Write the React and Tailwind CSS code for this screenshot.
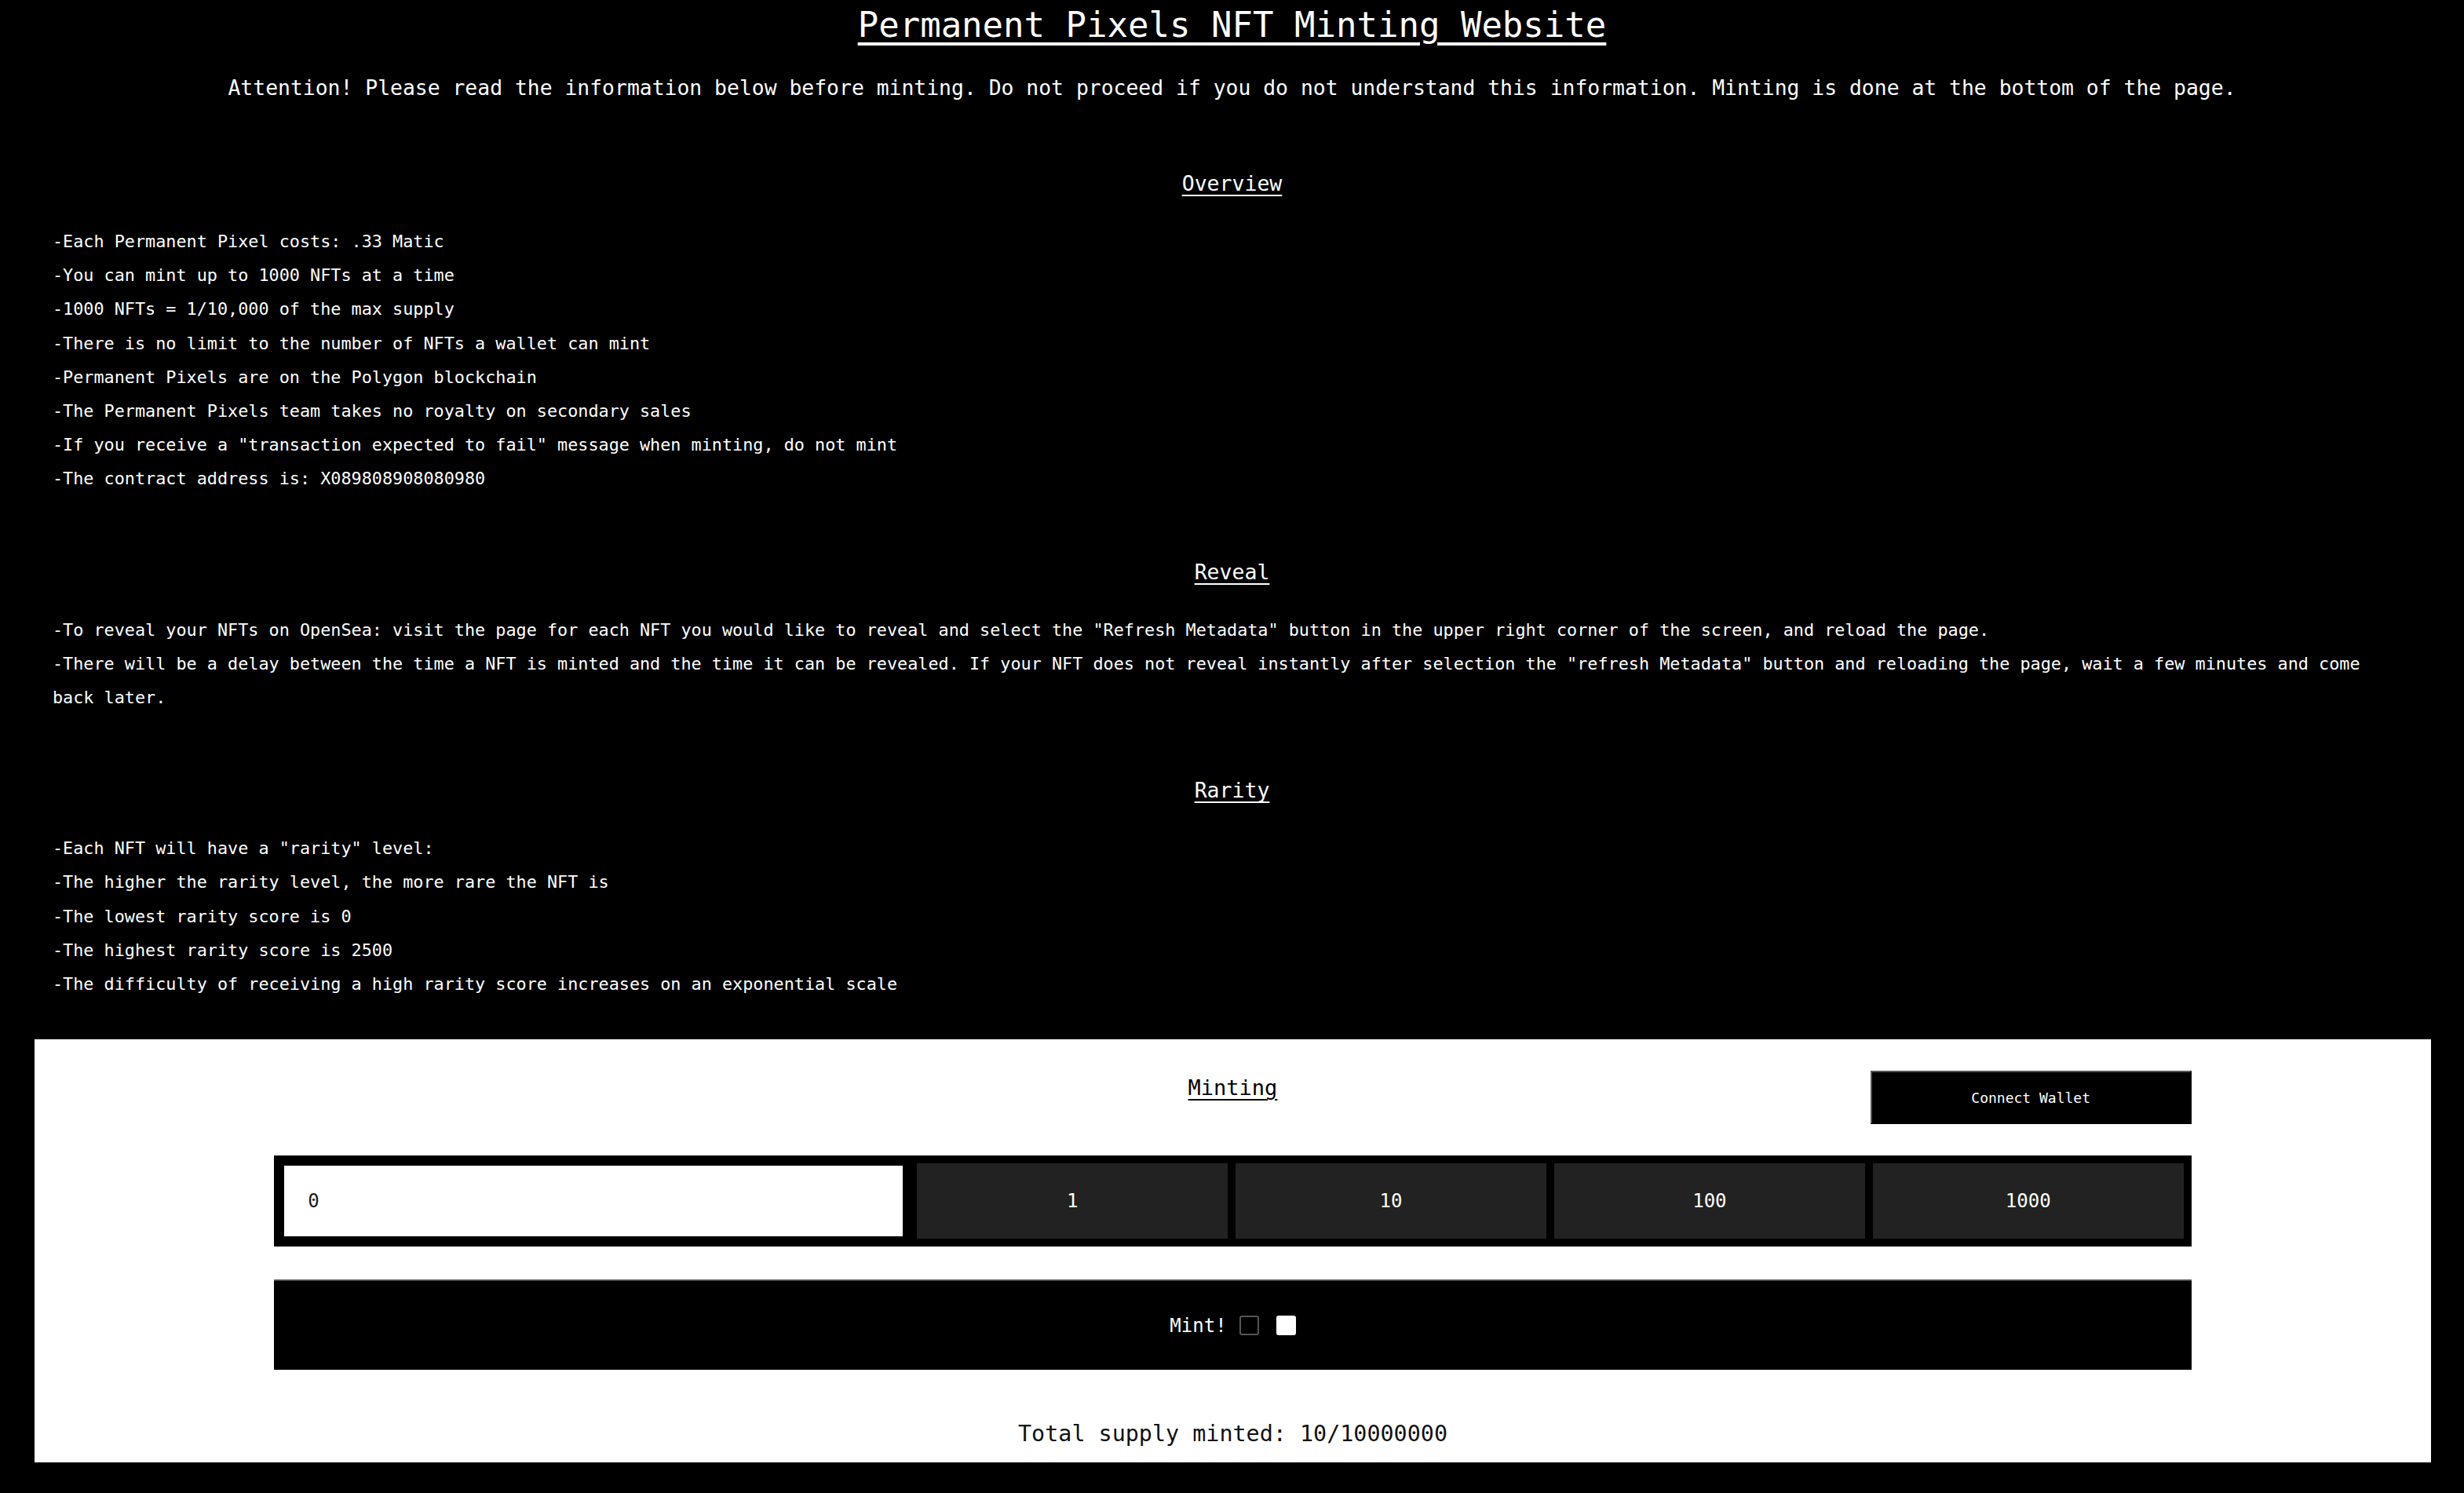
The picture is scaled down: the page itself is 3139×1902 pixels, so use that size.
import React, { useState } from "react";

const overview = [
  "-Each Permanent Pixel costs: .33 Matic",
  "-You can mint up to 1000 NFTs at a time",
  "-1000 NFTs = 1/10,000 of the max supply",
  "-There is no limit to the number of NFTs a wallet can mint",
  "-Permanent Pixels are on the Polygon blockchain",
  "-The Permanent Pixels team takes no royalty on secondary sales",
  '-If you receive a "transaction expected to fail" message when minting, do not mint',
  "-The contract address is: X089808908080980",
];

const reveal = [
  '-To reveal your NFTs on OpenSea: visit the page for each NFT you would like to reveal and select the "Refresh Metadata" button in the upper right corner of the screen, and reload the page.',
  '-There will be a delay between the time a NFT is minted and the time it can be revealed. If your NFT does not reveal instantly after selection the "refresh Metadata" button and reloading the page, wait a few minutes and come back later.',
];

const rarity = [
  '-Each NFT will have a "rarity" level:',
  "-The higher the rarity level, the more rare the NFT is",
  "-The lowest rarity score is 0",
  "-The highest rarity score is 2500",
  "-The difficulty of receiving a high rarity score increases on an exponential scale",
];

const Section = ({ title, lines, top }) => (
  <div>
    <h2 className={`${top} text-center text-[26.5px] leading-[40px] underline underline-offset-[5px]`}>
      {title}
    </h2>
    <div className="mt-[32px] px-[67px] text-[21.8px] leading-[43.2px]">
      {lines.map((line) => (
        <p key={line}>{line}</p>
      ))}
    </div>
  </div>
);

const App = () => {
  const [amount, setAmount] = useState(0);

  return (
    <div className="min-h-[1902px] bg-black text-white font-['DejaVu_Sans_Mono',monospace] pb-[39px]">
      <h1 className="text-center text-[44px] leading-[64px] underline underline-offset-[7px]">
        Permanent Pixels NFT Minting Website
      </h1>
      <p className="mt-[28px] text-center text-[26.4px] leading-[40px]">
        Attention! Please read the information below before minting. Do not proceed if you do not understand this information. Minting is done at the bottom of the page.
      </p>

      <Section title="Overview" lines={overview} top="mt-[82px]" />
      <Section title="Reveal" lines={reveal} top="mt-[77px]" />
      <Section title="Rarity" lines={rarity} top="mt-[77px]" />

      {/* Minting panel */}
      <div className="mt-[49px] ml-[44px] mr-[42px] h-[539px] bg-white text-[#111]">
        <div className="w-4/5 mx-auto grid grid-cols-3 items-start pt-[40px]">
          <div />
          <h2 className="text-center text-[27px] leading-[40px] mt-[2px] underline underline-offset-[5px] text-black">
            Minting
          </h2>
          <div className="flex justify-end">
            <button className="w-[409px] h-[68px] bg-black text-white text-[18px] border-2 border-t-[#555] border-l-[#555] border-r-black border-b-black">
              Connect Wallet
            </button>
          </div>
        </div>

        <div className="w-4/5 mx-auto mt-[40px] h-[116px] bg-black flex items-center pl-[13px] pr-[10px] gap-[10px]">
          <input
            type="text"
            value={amount}
            onChange={(e) => setAmount(e.target.value)}
            className="w-[788px] h-[90px] mr-[8px] bg-white text-[#1a1a1a] text-[24px] pl-[30px] outline-none"
          />
          {[1, 10, 100, 1000].map((n) => (
            <button
              key={n}
              onClick={() => setAmount(n)}
              className="flex-1 h-[96px] bg-[#222] text-white text-[24px]"
            >
              {n}
            </button>
          ))}
        </div>

        <button className="w-4/5 mx-auto mt-[42px] h-[115px] bg-black border-t-2 border-[#4a4a4a] flex items-center justify-center text-white text-[24px]">
          <span>Mint!</span>
          <span className="ml-[16px] w-[25px] h-[25px] rounded-[3px] border-2 border-[#555] bg-black" />
          <span className="ml-[22px] w-[25px] h-[25px] rounded-[3px] bg-white" />
        </button>

        <p className="mt-[62px] text-center text-[28.4px] leading-[40px] text-[#111]">
          Total supply minted: 10/10000000
        </p>
      </div>
    </div>
  );
};

export default App;
